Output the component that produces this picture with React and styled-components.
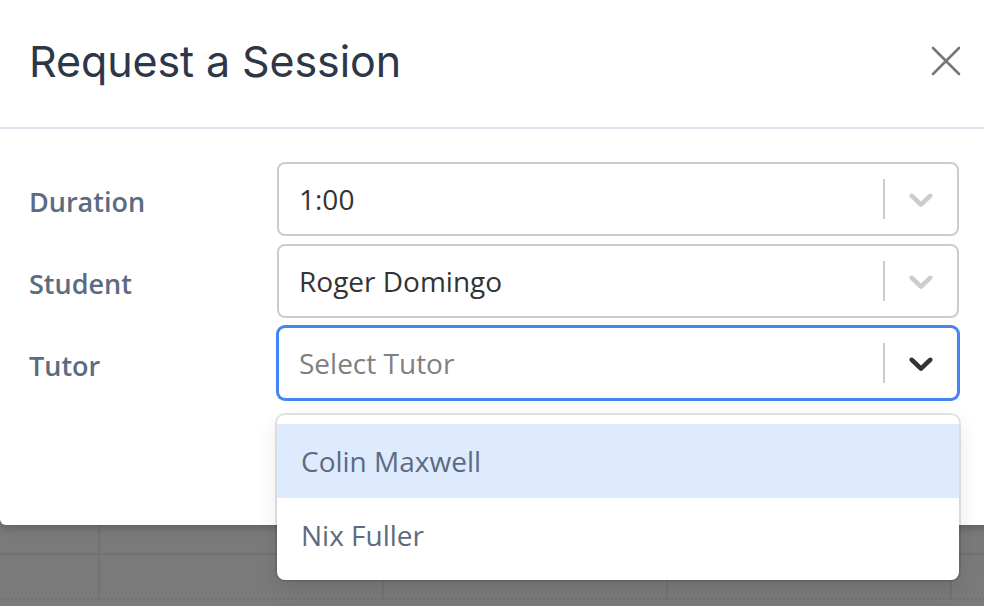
import React from "react";
import styled, { createGlobalStyle } from "styled-components";

const GlobalStyle = createGlobalStyle`
  html, body {
    margin: 0;
    padding: 0;
    overflow: hidden;
    background: #7a7a7a;
  }
  * {
    box-sizing: border-box;
  }
`;

const Screen = styled.div`
  width: 984px;
  height: 606px;
  display: flex;
  flex-direction: column;
  overflow: hidden;
  background: #7a7a7a;
`;

const Modal = styled.div`
  position: relative;
  z-index: 2;
  width: 1000px;
  background: #fff;
  border-radius: 0 0 6px 6px;
  box-shadow: 0 2px 10px rgba(0, 0, 0, 0.25);
`;

const ModalHeader = styled.div`
  height: 129px;
  display: flex;
  align-items: center;
  justify-content: space-between;
  padding: 0 32px 6px 29px;
  border-bottom: 2px solid #dde4ee;
`;

const Title = styled.h2`
  margin: 0;
  font-family: Inter, "Liberation Sans", sans-serif;
  font-weight: 400;
  font-size: 43px;
  letter-spacing: -0.1px;
  color: #2d3748;
`;

const CloseButton = styled.button`
  width: 44px;
  height: 44px;
  border: none;
  background: none;
  padding: 0;
  display: flex;
  align-items: center;
  justify-content: center;
  color: #777;
`;

const ModalBody = styled.div`
  padding: 33px 41px 125px 29px;
  display: grid;
  grid-template-columns: 248px 1fr;
  row-gap: 8px;
`;

const Label = styled.div`
  height: 74px;
  display: flex;
  align-items: center;
  padding-top: 4px;
  font-family: "Open Sans", sans-serif;
  font-weight: 600;
  font-size: 27px;
  color: #5c6b80;
`;

const SelectWrap = styled.div`
  position: relative;
`;

const Control = styled.div`
  height: 74px;
  display: flex;
  align-items: center;
  border: 2px solid ${(p) => (p.focused ? "#4385f5" : "#cccccc")};
  box-shadow: ${(p) => (p.focused ? "0 0 0 1px #4385f5" : "none")};
  border-radius: 8px;
  background: #fff;
`;

const Value = styled.div`
  flex: 1;
  padding: 0 20px;
  font-family: "Open Sans", sans-serif;
  font-size: 28px;
  color: ${(p) => (p.placeholder ? "#808080" : "#333333")};
`;

const Separator = styled.span`
  width: 2px;
  height: 40px;
  background: #cccccc;
`;

const Indicator = styled.div`
  width: 72px;
  display: flex;
  align-items: center;
  justify-content: center;
  color: ${(p) => (p.focused ? "#333333" : "#cccccc")};
`;

const Menu = styled.div`
  position: absolute;
  top: calc(100% + 15px);
  left: 0;
  right: 0;
  z-index: 3;
  background: #fff;
  border-radius: 8px;
  padding: 9px 0 8px;
  box-shadow: 0 0 0 2px rgba(0, 0, 0, 0.1), 0 8px 22px rgba(0, 0, 0, 0.1);
`;

const Option = styled.div`
  height: 74px;
  display: flex;
  align-items: center;
  padding: 0 24px;
  font-family: "Open Sans", sans-serif;
  font-size: 28px;
  color: #5c6b80;
  background: ${(p) => (p.active ? "#deebff" : "transparent")};
`;

const Calendar = styled.div`
  display: grid;
  grid-template-columns: 100px repeat(4, 284px) 1fr;
  grid-template-rows: 30px 45px 1fr;
`;

const Cell = styled.div`
  border-right: 2px solid #717178;
  border-bottom: ${(p) =>
    p.dotted ? "2px dotted #707076" : p.solid ? "2px solid #717178" : "none"};
`;

const Chevron = () => (
  <svg width="40" height="40" viewBox="0 0 20 20" fill="currentColor">
    <path d="M4.516 7.548c0.436-0.446 1.043-0.481 1.576 0l3.908 3.747 3.908-3.747c0.533-0.481 1.141-0.446 1.574 0 0.436 0.445 0.408 1.197 0 1.615-0.406 0.418-4.695 4.502-4.695 4.502-0.217 0.223-0.502 0.335-0.787 0.335s-0.57-0.112-0.789-0.335c0 0-4.287-4.084-4.695-4.502s-0.436-1.17 0-1.615z" />
  </svg>
);

const CloseIcon = () => (
  <svg width="32" height="32" viewBox="0 0 32 32" stroke="currentColor" strokeWidth="2.6" strokeLinecap="round">
    <path d="M3 3 L29 29 M29 3 L3 29" />
  </svg>
);

const Select = ({ value, placeholder, focused, options }) => (
  <SelectWrap>
    <Control focused={focused}>
      <Value placeholder={!value ? 1 : 0}>{value || placeholder}</Value>
      <Separator />
      <Indicator focused={focused}>
        <Chevron />
      </Indicator>
    </Control>
    {options && (
      <Menu>
        {options.map((o, i) => (
          <Option key={o} active={i === 0}>
            {o}
          </Option>
        ))}
      </Menu>
    )}
  </SelectWrap>
);

export default function App() {
  const cols = [0, 1, 2, 3, 4, 5];
  return (
    <Screen>
      <GlobalStyle />
      <Modal>
        <ModalHeader>
          <Title>Request a Session</Title>
          <CloseButton>
            <CloseIcon />
          </CloseButton>
        </ModalHeader>
        <ModalBody>
          <Label>Duration</Label>
          <Select value="1:00" />
          <Label>Student</Label>
          <Select value="Roger Domingo" />
          <Label>Tutor</Label>
          <Select
            placeholder="Select Tutor"
            focused
            options={["Colin Maxwell", "Nix Fuller"]}
          />
        </ModalBody>
      </Modal>
      <Calendar>
        {cols.map((c) => (
          <Cell key={"a" + c} solid />
        ))}
        {cols.map((c) => (
          <Cell key={"b" + c} dotted />
        ))}
        {cols.map((c) => (
          <Cell key={"c" + c} />
        ))}
      </Calendar>
    </Screen>
  );
}
